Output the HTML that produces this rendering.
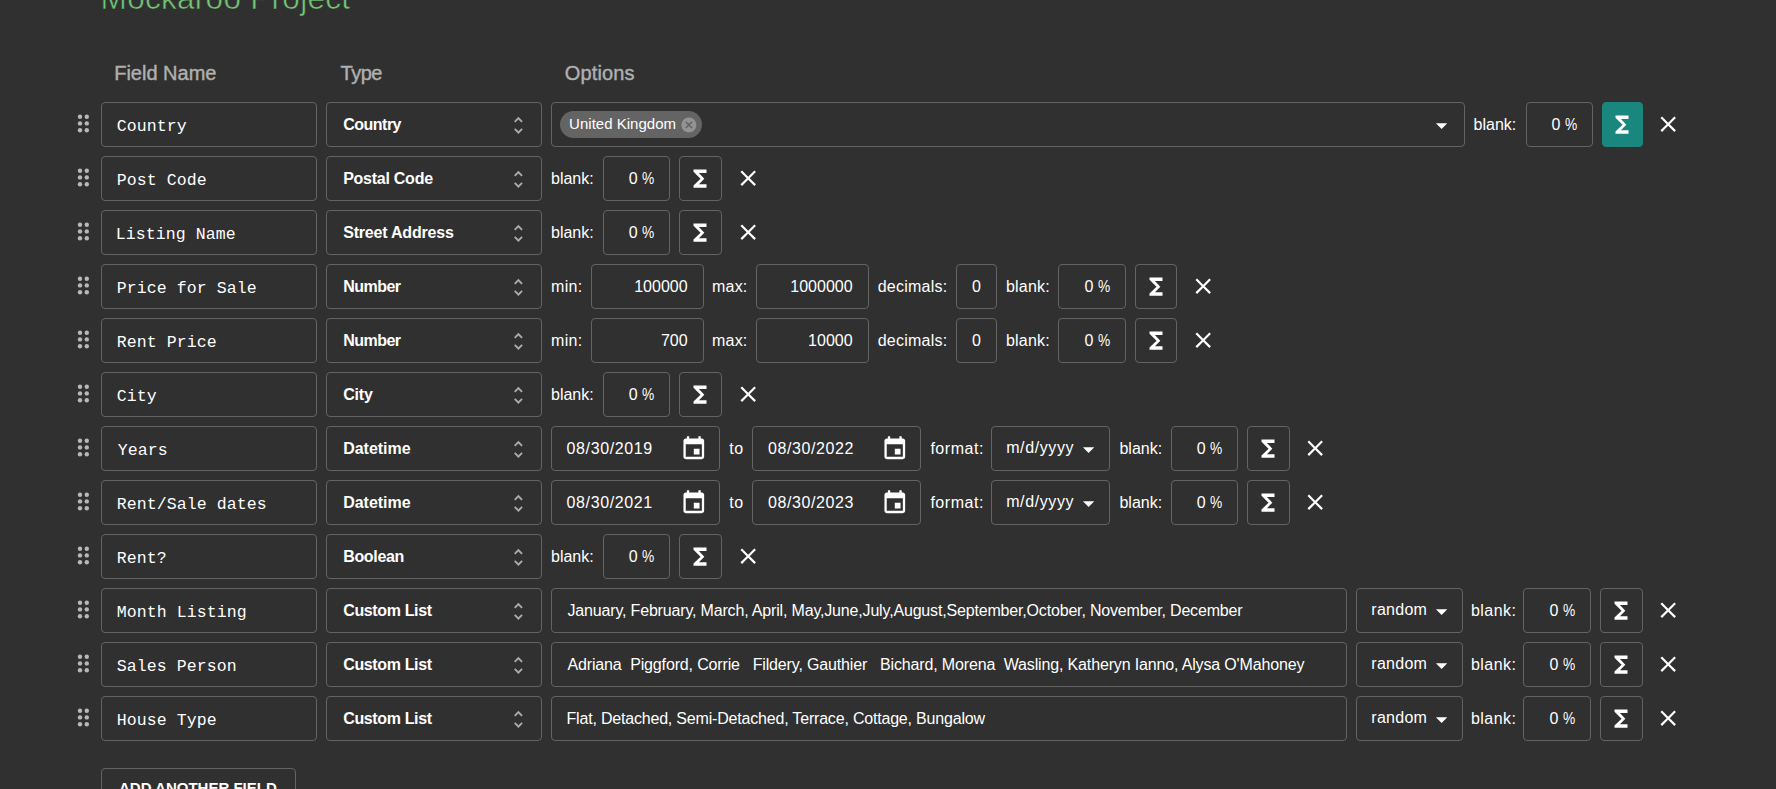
<!DOCTYPE html><html><head><meta charset="utf-8"><style>
html,body{margin:0;padding:0}
body{background:#303030;width:1776px;height:789px;overflow:hidden;position:relative;font-family:"Liberation Sans",sans-serif;color:#fff}
.bx{position:absolute;box-sizing:border-box;border:1px solid #636363;border-radius:4px}
.act{background:#1a877e;border-color:#1a877e}
.chip{position:absolute;background:#646464;border-radius:14px}
.chipx{position:absolute;width:14.8px;height:14.8px;border-radius:50%;background:#9a9a9a}
.ic{position:absolute;overflow:visible}
.t{position:absolute;white-space:pre;line-height:0;height:0}
.t::before{content:"";}
.s16{font-size:16px}
.s15{font-size:15px}
.typ{font-size:16px;font-weight:bold;letter-spacing:-0.2px}
.pc{font-size:16px;display:inline-block;transform:scaleX(.86);transform-origin:100% 50%;margin-left:-2px}
.mono{font-family:"Liberation Mono",monospace;font-size:16.5px;letter-spacing:0.1px}
.hdr{font-size:20px;color:#b0b0b0;-webkit-text-stroke:0.4px #b0b0b0}
.title{font-size:31.6px;color:#74c776;-webkit-text-stroke:0.6px #303030}
.btn{font-size:15px;font-weight:bold}
</style></head><body>
<div id="t0" class="t title" style="left:100.6px;top:-2.5px;letter-spacing:0.24px;"><span>Mockaroo Project</span></div>
<div id="t1" class="t hdr" style="left:114.2px;top:72.9px;"><span>Field Name</span></div>
<div id="t2" class="t hdr" style="left:340.6px;top:72.9px;letter-spacing:-0.533px;"><span>Type</span></div>
<div id="t3" class="t hdr" style="left:564.7px;top:72.9px;letter-spacing:0.167px;"><span>Options</span></div>
<svg class="ic" style="left:70px;top:102px;width:24px;height:45px" viewBox="0 0 24 45" fill="#b8b8b8"><circle cx="10.0" cy="14.7" r="2.2"/><circle cx="10.0" cy="21.4" r="2.2"/><circle cx="10.0" cy="28.2" r="2.2"/><circle cx="16.799999999999997" cy="14.7" r="2.2"/><circle cx="16.799999999999997" cy="21.4" r="2.2"/><circle cx="16.799999999999997" cy="28.2" r="2.2"/></svg>
<div class="bx" style="left:101px;top:102px;width:216px;height:45px;"></div>
<div id="t4" class="t mono" style="left:116.65px;top:126.8px;"><span>Country</span></div>
<div class="bx" style="left:326px;top:102px;width:216px;height:45px;"></div>
<div id="t5" class="t typ" style="left:343.2px;top:125.1px;letter-spacing:-0.5px;"><span>Country</span></div>
<svg class="ic" style="left:507.4px;top:113.5px;width:22.8px;height:22.8px" viewBox="0 0 24 24"><path fill="#aaaaaa" d="M12 5.83L15.17 9l1.41-1.41L12 3 7.41 7.59 8.83 9 12 5.83zm0 12.34L8.83 15l-1.41 1.41L12 21l4.59-4.59L15.17 15 12 18.17z"/></svg>
<div class="bx" style="left:551px;top:102px;width:914px;height:45px;"></div>
<div class="chip" style="left:560px;top:111px;width:142px;height:27px"></div>
<div id="t6" class="t s15" style="left:569.1px;top:124.1px;letter-spacing:0.015px;"><span>United Kingdom</span></div>
<svg class="ic" style="left:680.1px;top:116.1px;width:17.8px;height:17.8px" viewBox="0 0 24 24"><path fill="#939393" d="M12 2C6.47 2 2 6.47 2 12s4.47 10 10 10 10-4.47 10-10S17.53 2 12 2zm5 13.59L15.59 17 12 13.41 8.41 17 7 15.59 10.59 12 7 8.41 8.41 7 12 10.59 15.59 7 17 8.41 13.41 12 17 15.59z"/></svg>
<svg class="ic" style="left:1427.8px;top:111.5px;width:27.2px;height:27.2px" viewBox="0 0 24 24"><path fill="#fff" d="M7 10l5 5 5-5z"/></svg>
<div id="t7" class="t s16" style="left:1473.6px;top:125px;"><span>blank:</span></div>
<div class="bx" style="left:1526px;top:102px;width:67px;height:45px;"></div>
<div id="t8" class="t s16" style="right:199.0px;top:125px;"><span>0 <span class="pc">%</span></span></div>
<div class="bx act" style="left:1602px;top:102px;width:41px;height:45px"></div>
<svg class="ic" style="left:1609.4px;top:110.55px;width:26.0px;height:27.3px" viewBox="0 0 24 24" preserveAspectRatio="none"><path fill="#fff" d="M18 4H6v2l6.5 6L6 18v2h12v-3h-7l5-5-5-5h7z"/></svg>
<svg class="ic" style="left:1655.3px;top:111.3px;width:26.4px;height:26.4px" viewBox="0 0 24 24"><path fill="#fff" d="M19 6.41L17.59 5 12 10.59 6.41 5 5 6.41 10.59 12 5 17.59 6.41 19 12 13.41 17.59 19 19 17.59 13.41 12z"/></svg>
<svg class="ic" style="left:70px;top:156px;width:24px;height:45px" viewBox="0 0 24 45" fill="#b8b8b8"><circle cx="10.0" cy="14.7" r="2.2"/><circle cx="10.0" cy="21.4" r="2.2"/><circle cx="10.0" cy="28.2" r="2.2"/><circle cx="16.799999999999997" cy="14.7" r="2.2"/><circle cx="16.799999999999997" cy="21.4" r="2.2"/><circle cx="16.799999999999997" cy="28.2" r="2.2"/></svg>
<div class="bx" style="left:101px;top:156px;width:216px;height:45px;"></div>
<div id="t9" class="t mono" style="left:116.65px;top:180.8px;"><span>Post Code</span></div>
<div class="bx" style="left:326px;top:156px;width:216px;height:45px;"></div>
<div id="t10" class="t typ" style="left:343.2px;top:179.1px;letter-spacing:-0.26px;"><span>Postal Code</span></div>
<svg class="ic" style="left:507.4px;top:167.5px;width:22.8px;height:22.8px" viewBox="0 0 24 24"><path fill="#aaaaaa" d="M12 5.83L15.17 9l1.41-1.41L12 3 7.41 7.59 8.83 9 12 5.83zm0 12.34L8.83 15l-1.41 1.41L12 21l4.59-4.59L15.17 15 12 18.17z"/></svg>
<div id="t11" class="t s16" style="left:551.0px;top:179px;"><span>blank:</span></div>
<div class="bx" style="left:603px;top:156px;width:67px;height:45px;"></div>
<div id="t12" class="t s16" style="right:1121.6px;top:179px;"><span>0 <span class="pc">%</span></span></div>
<div class="bx" style="left:679px;top:156px;width:43px;height:45px;"></div>
<svg class="ic" style="left:687.0px;top:164.55px;width:26.0px;height:27.3px" viewBox="0 0 24 24" preserveAspectRatio="none"><path fill="#fff" d="M18 4H6v2l6.5 6L6 18v2h12v-3h-7l5-5-5-5h7z"/></svg>
<svg class="ic" style="left:735.3px;top:165.3px;width:26.4px;height:26.4px" viewBox="0 0 24 24"><path fill="#fff" d="M19 6.41L17.59 5 12 10.59 6.41 5 5 6.41 10.59 12 5 17.59 6.41 19 12 13.41 17.59 19 19 17.59 13.41 12z"/></svg>
<svg class="ic" style="left:70px;top:210px;width:24px;height:45px" viewBox="0 0 24 45" fill="#b8b8b8"><circle cx="10.0" cy="14.7" r="2.2"/><circle cx="10.0" cy="21.4" r="2.2"/><circle cx="10.0" cy="28.2" r="2.2"/><circle cx="16.799999999999997" cy="14.7" r="2.2"/><circle cx="16.799999999999997" cy="21.4" r="2.2"/><circle cx="16.799999999999997" cy="28.2" r="2.2"/></svg>
<div class="bx" style="left:101px;top:210px;width:216px;height:45px;"></div>
<div id="t13" class="t mono" style="left:115.65px;top:234.8px;"><span>Listing Name</span></div>
<div class="bx" style="left:326px;top:210px;width:216px;height:45px;"></div>
<div id="t14" class="t typ" style="left:343.2px;top:233.1px;"><span>Street Address</span></div>
<svg class="ic" style="left:507.4px;top:221.5px;width:22.8px;height:22.8px" viewBox="0 0 24 24"><path fill="#aaaaaa" d="M12 5.83L15.17 9l1.41-1.41L12 3 7.41 7.59 8.83 9 12 5.83zm0 12.34L8.83 15l-1.41 1.41L12 21l4.59-4.59L15.17 15 12 18.17z"/></svg>
<div id="t15" class="t s16" style="left:551.0px;top:233px;"><span>blank:</span></div>
<div class="bx" style="left:603px;top:210px;width:67px;height:45px;"></div>
<div id="t16" class="t s16" style="right:1121.6px;top:233px;"><span>0 <span class="pc">%</span></span></div>
<div class="bx" style="left:679px;top:210px;width:43px;height:45px;"></div>
<svg class="ic" style="left:687.0px;top:218.55px;width:26.0px;height:27.3px" viewBox="0 0 24 24" preserveAspectRatio="none"><path fill="#fff" d="M18 4H6v2l6.5 6L6 18v2h12v-3h-7l5-5-5-5h7z"/></svg>
<svg class="ic" style="left:735.3px;top:219.3px;width:26.4px;height:26.4px" viewBox="0 0 24 24"><path fill="#fff" d="M19 6.41L17.59 5 12 10.59 6.41 5 5 6.41 10.59 12 5 17.59 6.41 19 12 13.41 17.59 19 19 17.59 13.41 12z"/></svg>
<svg class="ic" style="left:70px;top:264px;width:24px;height:45px" viewBox="0 0 24 45" fill="#b8b8b8"><circle cx="10.0" cy="14.7" r="2.2"/><circle cx="10.0" cy="21.4" r="2.2"/><circle cx="10.0" cy="28.2" r="2.2"/><circle cx="16.799999999999997" cy="14.7" r="2.2"/><circle cx="16.799999999999997" cy="21.4" r="2.2"/><circle cx="16.799999999999997" cy="28.2" r="2.2"/></svg>
<div class="bx" style="left:101px;top:264px;width:216px;height:45px;"></div>
<div id="t17" class="t mono" style="left:116.65px;top:288.8px;"><span>Price for Sale</span></div>
<div class="bx" style="left:326px;top:264px;width:216px;height:45px;"></div>
<div id="t18" class="t typ" style="left:343.2px;top:287.1px;letter-spacing:-0.52px;"><span>Number</span></div>
<svg class="ic" style="left:507.4px;top:275.5px;width:22.8px;height:22.8px" viewBox="0 0 24 24"><path fill="#aaaaaa" d="M12 5.83L15.17 9l1.41-1.41L12 3 7.41 7.59 8.83 9 12 5.83zm0 12.34L8.83 15l-1.41 1.41L12 21l4.59-4.59L15.17 15 12 18.17z"/></svg>
<div id="t19" class="t s16" style="left:551.0px;top:287px;letter-spacing:0.333px;"><span>min:</span></div>
<div class="bx" style="left:591px;top:264px;width:113px;height:45px;"></div>
<div id="t20" class="t s16" style="right:1088.4px;top:287px;"><span>100000</span></div>
<div id="t21" class="t s16" style="left:712.0px;top:287px;letter-spacing:0.2px;"><span>max:</span></div>
<div class="bx" style="left:756px;top:264px;width:113px;height:45px;"></div>
<div id="t22" class="t s16" style="right:923.4px;top:287px;"><span>1000000</span></div>
<div id="t23" class="t s16" style="left:877.7px;top:287px;letter-spacing:0.25px;"><span>decimals:</span></div>
<div class="bx" style="left:956px;top:264px;width:41px;height:45px;"></div>
<div id="t24" class="t s16" style="left:926.5px;width:100px;text-align:center;top:287px;"><span>0</span></div>
<div id="t25" class="t s16" style="left:1006.0px;top:287px;letter-spacing:0.2px;"><span>blank:</span></div>
<div class="bx" style="left:1058px;top:264px;width:68px;height:45px;"></div>
<div id="t26" class="t s16" style="right:666.0px;top:287px;"><span>0 <span class="pc">%</span></span></div>
<div class="bx" style="left:1135px;top:264px;width:42px;height:45px;"></div>
<svg class="ic" style="left:1142.5px;top:272.55px;width:26.0px;height:27.3px" viewBox="0 0 24 24" preserveAspectRatio="none"><path fill="#fff" d="M18 4H6v2l6.5 6L6 18v2h12v-3h-7l5-5-5-5h7z"/></svg>
<svg class="ic" style="left:1190.3px;top:273.3px;width:26.4px;height:26.4px" viewBox="0 0 24 24"><path fill="#fff" d="M19 6.41L17.59 5 12 10.59 6.41 5 5 6.41 10.59 12 5 17.59 6.41 19 12 13.41 17.59 19 19 17.59 13.41 12z"/></svg>
<svg class="ic" style="left:70px;top:318px;width:24px;height:45px" viewBox="0 0 24 45" fill="#b8b8b8"><circle cx="10.0" cy="14.7" r="2.2"/><circle cx="10.0" cy="21.4" r="2.2"/><circle cx="10.0" cy="28.2" r="2.2"/><circle cx="16.799999999999997" cy="14.7" r="2.2"/><circle cx="16.799999999999997" cy="21.4" r="2.2"/><circle cx="16.799999999999997" cy="28.2" r="2.2"/></svg>
<div class="bx" style="left:101px;top:318px;width:216px;height:45px;"></div>
<div id="t27" class="t mono" style="left:116.65px;top:342.8px;"><span>Rent Price</span></div>
<div class="bx" style="left:326px;top:318px;width:216px;height:45px;"></div>
<div id="t28" class="t typ" style="left:343.2px;top:341.1px;letter-spacing:-0.52px;"><span>Number</span></div>
<svg class="ic" style="left:507.4px;top:329.5px;width:22.8px;height:22.8px" viewBox="0 0 24 24"><path fill="#aaaaaa" d="M12 5.83L15.17 9l1.41-1.41L12 3 7.41 7.59 8.83 9 12 5.83zm0 12.34L8.83 15l-1.41 1.41L12 21l4.59-4.59L15.17 15 12 18.17z"/></svg>
<div id="t29" class="t s16" style="left:551.0px;top:341px;letter-spacing:0.333px;"><span>min:</span></div>
<div class="bx" style="left:591px;top:318px;width:113px;height:45px;"></div>
<div id="t30" class="t s16" style="right:1088.4px;top:341px;"><span>700</span></div>
<div id="t31" class="t s16" style="left:712.0px;top:341px;letter-spacing:0.2px;"><span>max:</span></div>
<div class="bx" style="left:756px;top:318px;width:113px;height:45px;"></div>
<div id="t32" class="t s16" style="right:923.4px;top:341px;"><span>10000</span></div>
<div id="t33" class="t s16" style="left:877.7px;top:341px;letter-spacing:0.25px;"><span>decimals:</span></div>
<div class="bx" style="left:956px;top:318px;width:41px;height:45px;"></div>
<div id="t34" class="t s16" style="left:926.5px;width:100px;text-align:center;top:341px;"><span>0</span></div>
<div id="t35" class="t s16" style="left:1006.0px;top:341px;letter-spacing:0.2px;"><span>blank:</span></div>
<div class="bx" style="left:1058px;top:318px;width:68px;height:45px;"></div>
<div id="t36" class="t s16" style="right:666.0px;top:341px;"><span>0 <span class="pc">%</span></span></div>
<div class="bx" style="left:1135px;top:318px;width:42px;height:45px;"></div>
<svg class="ic" style="left:1142.5px;top:326.55px;width:26.0px;height:27.3px" viewBox="0 0 24 24" preserveAspectRatio="none"><path fill="#fff" d="M18 4H6v2l6.5 6L6 18v2h12v-3h-7l5-5-5-5h7z"/></svg>
<svg class="ic" style="left:1190.3px;top:327.3px;width:26.4px;height:26.4px" viewBox="0 0 24 24"><path fill="#fff" d="M19 6.41L17.59 5 12 10.59 6.41 5 5 6.41 10.59 12 5 17.59 6.41 19 12 13.41 17.59 19 19 17.59 13.41 12z"/></svg>
<svg class="ic" style="left:70px;top:372px;width:24px;height:45px" viewBox="0 0 24 45" fill="#b8b8b8"><circle cx="10.0" cy="14.7" r="2.2"/><circle cx="10.0" cy="21.4" r="2.2"/><circle cx="10.0" cy="28.2" r="2.2"/><circle cx="16.799999999999997" cy="14.7" r="2.2"/><circle cx="16.799999999999997" cy="21.4" r="2.2"/><circle cx="16.799999999999997" cy="28.2" r="2.2"/></svg>
<div class="bx" style="left:101px;top:372px;width:216px;height:45px;"></div>
<div id="t37" class="t mono" style="left:116.65px;top:396.8px;"><span>City</span></div>
<div class="bx" style="left:326px;top:372px;width:216px;height:45px;"></div>
<div id="t38" class="t typ" style="left:343.2px;top:395.1px;"><span>City</span></div>
<svg class="ic" style="left:507.4px;top:383.5px;width:22.8px;height:22.8px" viewBox="0 0 24 24"><path fill="#aaaaaa" d="M12 5.83L15.17 9l1.41-1.41L12 3 7.41 7.59 8.83 9 12 5.83zm0 12.34L8.83 15l-1.41 1.41L12 21l4.59-4.59L15.17 15 12 18.17z"/></svg>
<div id="t39" class="t s16" style="left:551.0px;top:395px;"><span>blank:</span></div>
<div class="bx" style="left:603px;top:372px;width:67px;height:45px;"></div>
<div id="t40" class="t s16" style="right:1121.6px;top:395px;"><span>0 <span class="pc">%</span></span></div>
<div class="bx" style="left:679px;top:372px;width:43px;height:45px;"></div>
<svg class="ic" style="left:687.0px;top:380.55px;width:26.0px;height:27.3px" viewBox="0 0 24 24" preserveAspectRatio="none"><path fill="#fff" d="M18 4H6v2l6.5 6L6 18v2h12v-3h-7l5-5-5-5h7z"/></svg>
<svg class="ic" style="left:735.3px;top:381.3px;width:26.4px;height:26.4px" viewBox="0 0 24 24"><path fill="#fff" d="M19 6.41L17.59 5 12 10.59 6.41 5 5 6.41 10.59 12 5 17.59 6.41 19 12 13.41 17.59 19 19 17.59 13.41 12z"/></svg>
<svg class="ic" style="left:70px;top:426px;width:24px;height:45px" viewBox="0 0 24 45" fill="#b8b8b8"><circle cx="10.0" cy="14.7" r="2.2"/><circle cx="10.0" cy="21.4" r="2.2"/><circle cx="10.0" cy="28.2" r="2.2"/><circle cx="16.799999999999997" cy="14.7" r="2.2"/><circle cx="16.799999999999997" cy="21.4" r="2.2"/><circle cx="16.799999999999997" cy="28.2" r="2.2"/></svg>
<div class="bx" style="left:101px;top:426px;width:216px;height:45px;"></div>
<div id="t41" class="t mono" style="left:117.65px;top:450.8px;"><span>Years</span></div>
<div class="bx" style="left:326px;top:426px;width:216px;height:45px;"></div>
<div id="t42" class="t typ" style="left:343.2px;top:449.1px;letter-spacing:-0.029px;"><span>Datetime</span></div>
<svg class="ic" style="left:507.4px;top:437.5px;width:22.8px;height:22.8px" viewBox="0 0 24 24"><path fill="#aaaaaa" d="M12 5.83L15.17 9l1.41-1.41L12 3 7.41 7.59 8.83 9 12 5.83zm0 12.34L8.83 15l-1.41 1.41L12 21l4.59-4.59L15.17 15 12 18.17z"/></svg>
<div class="bx" style="left:551px;top:426px;width:169px;height:45px;"></div>
<div id="t43" class="t s16" style="left:566.6px;top:449px;letter-spacing:0.6px;"><span>08/30/2019</span></div>
<svg class="ic" style="left:679.85px;top:434.7px;width:27.6px;height:27.6px" viewBox="0 0 24 24"><path fill="#fff" d="M17 12h-5v5h5v-5zM16 1v2H8V1H6v2H5c-1.11 0-1.99.9-1.99 2L3 19c0 1.1.89 2 2 2h14c1.1 0 2-.9 2-2V5c0-1.1-.9-2-2-2h-1V1h-2zm3 18H5V8h14v11z"/></svg>
<div id="t44" class="t s16" style="left:729.3px;top:449px;letter-spacing:0.6px;"><span>to</span></div>
<div class="bx" style="left:752px;top:426px;width:169px;height:45px;"></div>
<div id="t45" class="t s16" style="left:768.0px;top:449px;letter-spacing:0.6px;"><span>08/30/2022</span></div>
<svg class="ic" style="left:880.85px;top:434.7px;width:27.6px;height:27.6px" viewBox="0 0 24 24"><path fill="#fff" d="M17 12h-5v5h5v-5zM16 1v2H8V1H6v2H5c-1.11 0-1.99.9-1.99 2L3 19c0 1.1.89 2 2 2h14c1.1 0 2-.9 2-2V5c0-1.1-.9-2-2-2h-1V1h-2zm3 18H5V8h14v11z"/></svg>
<div id="t46" class="t s16" style="left:930.4px;top:449px;letter-spacing:0.534px;"><span>format:</span></div>
<div class="bx" style="left:991px;top:426px;width:119px;height:45px;"></div>
<div id="t47" class="t s16" style="left:1006.2px;top:448px;letter-spacing:0.6px;"><span>m/d/yyyy</span></div>
<svg class="ic" style="left:1074.6px;top:435.5px;width:27.2px;height:27.2px" viewBox="0 0 24 24"><path fill="#fff" d="M7 10l5 5 5-5z"/></svg>
<div id="t48" class="t s16" style="left:1119.4px;top:449px;letter-spacing:0.04px;"><span>blank:</span></div>
<div class="bx" style="left:1171px;top:426px;width:67px;height:45px;"></div>
<div id="t49" class="t s16" style="right:553.6px;top:449px;"><span>0 <span class="pc">%</span></span></div>
<div class="bx" style="left:1247px;top:426px;width:43px;height:45px;"></div>
<svg class="ic" style="left:1255.0px;top:434.55px;width:26.0px;height:27.3px" viewBox="0 0 24 24" preserveAspectRatio="none"><path fill="#fff" d="M18 4H6v2l6.5 6L6 18v2h12v-3h-7l5-5-5-5h7z"/></svg>
<svg class="ic" style="left:1302.2px;top:435.3px;width:26.4px;height:26.4px" viewBox="0 0 24 24"><path fill="#fff" d="M19 6.41L17.59 5 12 10.59 6.41 5 5 6.41 10.59 12 5 17.59 6.41 19 12 13.41 17.59 19 19 17.59 13.41 12z"/></svg>
<svg class="ic" style="left:70px;top:480px;width:24px;height:45px" viewBox="0 0 24 45" fill="#b8b8b8"><circle cx="10.0" cy="14.7" r="2.2"/><circle cx="10.0" cy="21.4" r="2.2"/><circle cx="10.0" cy="28.2" r="2.2"/><circle cx="16.799999999999997" cy="14.7" r="2.2"/><circle cx="16.799999999999997" cy="21.4" r="2.2"/><circle cx="16.799999999999997" cy="28.2" r="2.2"/></svg>
<div class="bx" style="left:101px;top:480px;width:216px;height:45px;"></div>
<div id="t50" class="t mono" style="left:116.65px;top:504.8px;"><span>Rent/Sale dates</span></div>
<div class="bx" style="left:326px;top:480px;width:216px;height:45px;"></div>
<div id="t51" class="t typ" style="left:343.2px;top:503.1px;letter-spacing:-0.029px;"><span>Datetime</span></div>
<svg class="ic" style="left:507.4px;top:491.5px;width:22.8px;height:22.8px" viewBox="0 0 24 24"><path fill="#aaaaaa" d="M12 5.83L15.17 9l1.41-1.41L12 3 7.41 7.59 8.83 9 12 5.83zm0 12.34L8.83 15l-1.41 1.41L12 21l4.59-4.59L15.17 15 12 18.17z"/></svg>
<div class="bx" style="left:551px;top:480px;width:169px;height:45px;"></div>
<div id="t52" class="t s16" style="left:566.6px;top:503px;letter-spacing:0.6px;"><span>08/30/2021</span></div>
<svg class="ic" style="left:679.85px;top:488.7px;width:27.6px;height:27.6px" viewBox="0 0 24 24"><path fill="#fff" d="M17 12h-5v5h5v-5zM16 1v2H8V1H6v2H5c-1.11 0-1.99.9-1.99 2L3 19c0 1.1.89 2 2 2h14c1.1 0 2-.9 2-2V5c0-1.1-.9-2-2-2h-1V1h-2zm3 18H5V8h14v11z"/></svg>
<div id="t53" class="t s16" style="left:729.3px;top:503px;letter-spacing:0.6px;"><span>to</span></div>
<div class="bx" style="left:752px;top:480px;width:169px;height:45px;"></div>
<div id="t54" class="t s16" style="left:768.0px;top:503px;letter-spacing:0.6px;"><span>08/30/2023</span></div>
<svg class="ic" style="left:880.85px;top:488.7px;width:27.6px;height:27.6px" viewBox="0 0 24 24"><path fill="#fff" d="M17 12h-5v5h5v-5zM16 1v2H8V1H6v2H5c-1.11 0-1.99.9-1.99 2L3 19c0 1.1.89 2 2 2h14c1.1 0 2-.9 2-2V5c0-1.1-.9-2-2-2h-1V1h-2zm3 18H5V8h14v11z"/></svg>
<div id="t55" class="t s16" style="left:930.4px;top:503px;letter-spacing:0.534px;"><span>format:</span></div>
<div class="bx" style="left:991px;top:480px;width:119px;height:45px;"></div>
<div id="t56" class="t s16" style="left:1006.2px;top:502px;letter-spacing:0.6px;"><span>m/d/yyyy</span></div>
<svg class="ic" style="left:1074.6px;top:489.5px;width:27.2px;height:27.2px" viewBox="0 0 24 24"><path fill="#fff" d="M7 10l5 5 5-5z"/></svg>
<div id="t57" class="t s16" style="left:1119.4px;top:503px;letter-spacing:0.04px;"><span>blank:</span></div>
<div class="bx" style="left:1171px;top:480px;width:67px;height:45px;"></div>
<div id="t58" class="t s16" style="right:553.6px;top:503px;"><span>0 <span class="pc">%</span></span></div>
<div class="bx" style="left:1247px;top:480px;width:43px;height:45px;"></div>
<svg class="ic" style="left:1255.0px;top:488.55px;width:26.0px;height:27.3px" viewBox="0 0 24 24" preserveAspectRatio="none"><path fill="#fff" d="M18 4H6v2l6.5 6L6 18v2h12v-3h-7l5-5-5-5h7z"/></svg>
<svg class="ic" style="left:1302.2px;top:489.3px;width:26.4px;height:26.4px" viewBox="0 0 24 24"><path fill="#fff" d="M19 6.41L17.59 5 12 10.59 6.41 5 5 6.41 10.59 12 5 17.59 6.41 19 12 13.41 17.59 19 19 17.59 13.41 12z"/></svg>
<svg class="ic" style="left:70px;top:534px;width:24px;height:45px" viewBox="0 0 24 45" fill="#b8b8b8"><circle cx="10.0" cy="14.7" r="2.2"/><circle cx="10.0" cy="21.4" r="2.2"/><circle cx="10.0" cy="28.2" r="2.2"/><circle cx="16.799999999999997" cy="14.7" r="2.2"/><circle cx="16.799999999999997" cy="21.4" r="2.2"/><circle cx="16.799999999999997" cy="28.2" r="2.2"/></svg>
<div class="bx" style="left:101px;top:534px;width:216px;height:45px;"></div>
<div id="t59" class="t mono" style="left:116.65px;top:558.8px;"><span>Rent?</span></div>
<div class="bx" style="left:326px;top:534px;width:216px;height:45px;"></div>
<div id="t60" class="t typ" style="left:343.2px;top:557.1px;letter-spacing:-0.333px;"><span>Boolean</span></div>
<svg class="ic" style="left:507.4px;top:545.5px;width:22.8px;height:22.8px" viewBox="0 0 24 24"><path fill="#aaaaaa" d="M12 5.83L15.17 9l1.41-1.41L12 3 7.41 7.59 8.83 9 12 5.83zm0 12.34L8.83 15l-1.41 1.41L12 21l4.59-4.59L15.17 15 12 18.17z"/></svg>
<div id="t61" class="t s16" style="left:551.0px;top:557px;"><span>blank:</span></div>
<div class="bx" style="left:603px;top:534px;width:67px;height:45px;"></div>
<div id="t62" class="t s16" style="right:1121.6px;top:557px;"><span>0 <span class="pc">%</span></span></div>
<div class="bx" style="left:679px;top:534px;width:43px;height:45px;"></div>
<svg class="ic" style="left:687.0px;top:542.55px;width:26.0px;height:27.3px" viewBox="0 0 24 24" preserveAspectRatio="none"><path fill="#fff" d="M18 4H6v2l6.5 6L6 18v2h12v-3h-7l5-5-5-5h7z"/></svg>
<svg class="ic" style="left:735.3px;top:543.3px;width:26.4px;height:26.4px" viewBox="0 0 24 24"><path fill="#fff" d="M19 6.41L17.59 5 12 10.59 6.41 5 5 6.41 10.59 12 5 17.59 6.41 19 12 13.41 17.59 19 19 17.59 13.41 12z"/></svg>
<svg class="ic" style="left:70px;top:588px;width:24px;height:45px" viewBox="0 0 24 45" fill="#b8b8b8"><circle cx="10.0" cy="14.7" r="2.2"/><circle cx="10.0" cy="21.4" r="2.2"/><circle cx="10.0" cy="28.2" r="2.2"/><circle cx="16.799999999999997" cy="14.7" r="2.2"/><circle cx="16.799999999999997" cy="21.4" r="2.2"/><circle cx="16.799999999999997" cy="28.2" r="2.2"/></svg>
<div class="bx" style="left:101px;top:588px;width:216px;height:45px;"></div>
<div id="t63" class="t mono" style="left:116.65px;top:612.8px;"><span>Month Listing</span></div>
<div class="bx" style="left:326px;top:588px;width:216px;height:45px;"></div>
<div id="t64" class="t typ" style="left:343.2px;top:611.1px;letter-spacing:-0.36px;"><span>Custom List</span></div>
<svg class="ic" style="left:507.4px;top:599.5px;width:22.8px;height:22.8px" viewBox="0 0 24 24"><path fill="#aaaaaa" d="M12 5.83L15.17 9l1.41-1.41L12 3 7.41 7.59 8.83 9 12 5.83zm0 12.34L8.83 15l-1.41 1.41L12 21l4.59-4.59L15.17 15 12 18.17z"/></svg>
<div class="bx" style="left:551px;top:588px;width:796px;height:45px;"></div>
<div id="t65" class="t s16" style="left:567.5px;top:611px;letter-spacing:-0.173px;"><span>January, February, March, April, May,June,July,August,September,October, November, December</span></div>
<div class="bx" style="left:1356px;top:588px;width:107px;height:45px;"></div>
<div id="t66" class="t s16" style="left:1371.3px;top:610px;letter-spacing:0.28px;"><span>random</span></div>
<svg class="ic" style="left:1427.8px;top:597.5px;width:27.2px;height:27.2px" viewBox="0 0 24 24"><path fill="#fff" d="M7 10l5 5 5-5z"/></svg>
<div id="t67" class="t s16" style="left:1471.0px;top:611px;letter-spacing:0.44px;"><span>blank:</span></div>
<div class="bx" style="left:1523px;top:588px;width:68px;height:45px;"></div>
<div id="t68" class="t s16" style="right:201.0px;top:611px;"><span>0 <span class="pc">%</span></span></div>
<div class="bx" style="left:1600px;top:588px;width:43px;height:45px;"></div>
<svg class="ic" style="left:1608.0px;top:596.55px;width:26.0px;height:27.3px" viewBox="0 0 24 24" preserveAspectRatio="none"><path fill="#fff" d="M18 4H6v2l6.5 6L6 18v2h12v-3h-7l5-5-5-5h7z"/></svg>
<svg class="ic" style="left:1655.3px;top:597.3px;width:26.4px;height:26.4px" viewBox="0 0 24 24"><path fill="#fff" d="M19 6.41L17.59 5 12 10.59 6.41 5 5 6.41 10.59 12 5 17.59 6.41 19 12 13.41 17.59 19 19 17.59 13.41 12z"/></svg>
<svg class="ic" style="left:70px;top:642px;width:24px;height:45px" viewBox="0 0 24 45" fill="#b8b8b8"><circle cx="10.0" cy="14.7" r="2.2"/><circle cx="10.0" cy="21.4" r="2.2"/><circle cx="10.0" cy="28.2" r="2.2"/><circle cx="16.799999999999997" cy="14.7" r="2.2"/><circle cx="16.799999999999997" cy="21.4" r="2.2"/><circle cx="16.799999999999997" cy="28.2" r="2.2"/></svg>
<div class="bx" style="left:101px;top:642px;width:216px;height:45px;"></div>
<div id="t69" class="t mono" style="left:116.65px;top:666.8px;"><span>Sales Person</span></div>
<div class="bx" style="left:326px;top:642px;width:216px;height:45px;"></div>
<div id="t70" class="t typ" style="left:343.2px;top:665.1px;letter-spacing:-0.36px;"><span>Custom List</span></div>
<svg class="ic" style="left:507.4px;top:653.5px;width:22.8px;height:22.8px" viewBox="0 0 24 24"><path fill="#aaaaaa" d="M12 5.83L15.17 9l1.41-1.41L12 3 7.41 7.59 8.83 9 12 5.83zm0 12.34L8.83 15l-1.41 1.41L12 21l4.59-4.59L15.17 15 12 18.17z"/></svg>
<div class="bx" style="left:551px;top:642px;width:796px;height:45px;"></div>
<div id="t71" class="t s16" style="left:567.5px;top:665px;letter-spacing:-0.152px;"><span>Adriana  Piggford, Corrie   Fildery, Gauthier   Bichard, Morena  Wasling, Katheryn Ianno, Alysa O'Mahoney</span></div>
<div class="bx" style="left:1356px;top:642px;width:107px;height:45px;"></div>
<div id="t72" class="t s16" style="left:1371.3px;top:664px;letter-spacing:0.28px;"><span>random</span></div>
<svg class="ic" style="left:1427.8px;top:651.5px;width:27.2px;height:27.2px" viewBox="0 0 24 24"><path fill="#fff" d="M7 10l5 5 5-5z"/></svg>
<div id="t73" class="t s16" style="left:1471.0px;top:665px;letter-spacing:0.44px;"><span>blank:</span></div>
<div class="bx" style="left:1523px;top:642px;width:68px;height:45px;"></div>
<div id="t74" class="t s16" style="right:201.0px;top:665px;"><span>0 <span class="pc">%</span></span></div>
<div class="bx" style="left:1600px;top:642px;width:43px;height:45px;"></div>
<svg class="ic" style="left:1608.0px;top:650.55px;width:26.0px;height:27.3px" viewBox="0 0 24 24" preserveAspectRatio="none"><path fill="#fff" d="M18 4H6v2l6.5 6L6 18v2h12v-3h-7l5-5-5-5h7z"/></svg>
<svg class="ic" style="left:1655.3px;top:651.3px;width:26.4px;height:26.4px" viewBox="0 0 24 24"><path fill="#fff" d="M19 6.41L17.59 5 12 10.59 6.41 5 5 6.41 10.59 12 5 17.59 6.41 19 12 13.41 17.59 19 19 17.59 13.41 12z"/></svg>
<svg class="ic" style="left:70px;top:696px;width:24px;height:45px" viewBox="0 0 24 45" fill="#b8b8b8"><circle cx="10.0" cy="14.7" r="2.2"/><circle cx="10.0" cy="21.4" r="2.2"/><circle cx="10.0" cy="28.2" r="2.2"/><circle cx="16.799999999999997" cy="14.7" r="2.2"/><circle cx="16.799999999999997" cy="21.4" r="2.2"/><circle cx="16.799999999999997" cy="28.2" r="2.2"/></svg>
<div class="bx" style="left:101px;top:696px;width:216px;height:45px;"></div>
<div id="t75" class="t mono" style="left:116.65px;top:720.8px;"><span>House Type</span></div>
<div class="bx" style="left:326px;top:696px;width:216px;height:45px;"></div>
<div id="t76" class="t typ" style="left:343.2px;top:719.1px;letter-spacing:-0.36px;"><span>Custom List</span></div>
<svg class="ic" style="left:507.4px;top:707.5px;width:22.8px;height:22.8px" viewBox="0 0 24 24"><path fill="#aaaaaa" d="M12 5.83L15.17 9l1.41-1.41L12 3 7.41 7.59 8.83 9 12 5.83zm0 12.34L8.83 15l-1.41 1.41L12 21l4.59-4.59L15.17 15 12 18.17z"/></svg>
<div class="bx" style="left:551px;top:696px;width:796px;height:45px;"></div>
<div id="t77" class="t s16" style="left:566.5px;top:719px;letter-spacing:-0.192px;"><span>Flat, Detached, Semi-Detached, Terrace, Cottage, Bungalow</span></div>
<div class="bx" style="left:1356px;top:696px;width:107px;height:45px;"></div>
<div id="t78" class="t s16" style="left:1371.3px;top:718px;letter-spacing:0.28px;"><span>random</span></div>
<svg class="ic" style="left:1427.8px;top:705.5px;width:27.2px;height:27.2px" viewBox="0 0 24 24"><path fill="#fff" d="M7 10l5 5 5-5z"/></svg>
<div id="t79" class="t s16" style="left:1471.0px;top:719px;letter-spacing:0.44px;"><span>blank:</span></div>
<div class="bx" style="left:1523px;top:696px;width:68px;height:45px;"></div>
<div id="t80" class="t s16" style="right:201.0px;top:719px;"><span>0 <span class="pc">%</span></span></div>
<div class="bx" style="left:1600px;top:696px;width:43px;height:45px;"></div>
<svg class="ic" style="left:1608.0px;top:704.55px;width:26.0px;height:27.3px" viewBox="0 0 24 24" preserveAspectRatio="none"><path fill="#fff" d="M18 4H6v2l6.5 6L6 18v2h12v-3h-7l5-5-5-5h7z"/></svg>
<svg class="ic" style="left:1655.3px;top:705.3px;width:26.4px;height:26.4px" viewBox="0 0 24 24"><path fill="#fff" d="M19 6.41L17.59 5 12 10.59 6.41 5 5 6.41 10.59 12 5 17.59 6.41 19 12 13.41 17.59 19 19 17.59 13.41 12z"/></svg>
<div class="bx" style="left:101px;top:768px;width:195px;height:45px"></div>
<div id="t81" class="t btn" style="left:119.0px;top:787.5px;"><span>ADD ANOTHER FIELD</span></div>
</body></html>
